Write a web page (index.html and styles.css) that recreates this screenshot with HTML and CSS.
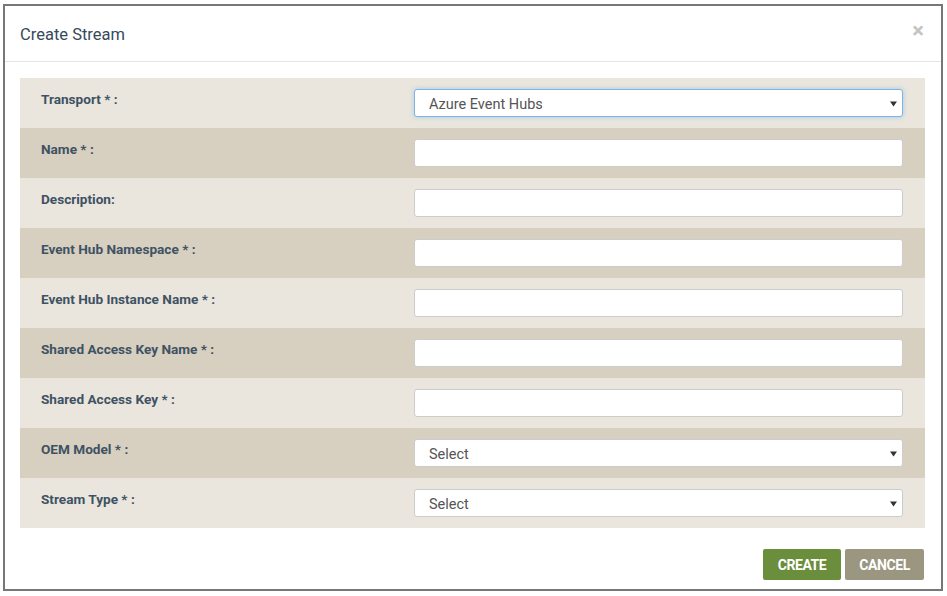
FILE: index.html
```html
<!DOCTYPE html>
<html>
<head>
<meta charset="utf-8">
<link rel="stylesheet" href="styles.css">
</head>
<body>
<div class="dialog">
  <div class="dialog-header">
    <h4 class="dialog-title">Create Stream</h4>
    <span class="close">&times;</span>
  </div>
  <div class="dialog-body">
    <div class="form">
      <div class="row light">
        <label class="lbl">Transport * :</label>
        <div class="field"><div class="select focus"><span>Azure Event Hubs</span><svg width="7" height="6" viewBox="0 0 7 6"><path d="M0 0.5h7L3.5 5.5z" fill="#333"/></svg></div></div>
      </div>
      <div class="row dark">
        <label class="lbl">Name * :</label>
        <div class="field"><input class="input" type="text"></div>
      </div>
      <div class="row light">
        <label class="lbl">Description:</label>
        <div class="field"><input class="input" type="text"></div>
      </div>
      <div class="row dark">
        <label class="lbl">Event Hub Namespace * :</label>
        <div class="field"><input class="input" type="text"></div>
      </div>
      <div class="row light">
        <label class="lbl">Event Hub Instance Name * :</label>
        <div class="field"><input class="input" type="text"></div>
      </div>
      <div class="row dark">
        <label class="lbl">Shared Access Key Name * :</label>
        <div class="field"><input class="input" type="text"></div>
      </div>
      <div class="row light">
        <label class="lbl">Shared Access Key * :</label>
        <div class="field"><input class="input" type="text"></div>
      </div>
      <div class="row dark">
        <label class="lbl">OEM Model * :</label>
        <div class="field"><div class="select"><span>Select</span><svg width="7" height="6" viewBox="0 0 7 6"><path d="M0 0.5h7L3.5 5.5z" fill="#333"/></svg></div></div>
      </div>
      <div class="row light">
        <label class="lbl">Stream Type * :</label>
        <div class="field"><div class="select"><span>Select</span><svg width="7" height="6" viewBox="0 0 7 6"><path d="M0 0.5h7L3.5 5.5z" fill="#333"/></svg></div></div>
      </div>
    </div>
  </div>
  <div class="dialog-footer">
    <button class="btn btn-create">CREATE</button>
    <button class="btn btn-cancel">CANCEL</button>
  </div>
</div>
</body>
</html>
```
FILE: styles.css
```css
* { box-sizing: border-box; }
html, body { margin: 0; padding: 0; background: #fff; }
body {
  font-family: Roboto, "Liberation Sans", sans-serif;
  padding: 4px 4px 5px 3px;
}
.dialog {
  width: 940px;
  height: 587px;
  border: 2px solid #777;
  background: #fff;
  display: flex;
  flex-direction: column;
}
.dialog-header {
  height: 56px;
  border-bottom: 1px solid #e5e5e5;
  display: flex;
  align-items: center;
  justify-content: space-between;
  padding: 2px 17px 0 15px;
}
.dialog-title {
  margin: 0;
  font-size: 16.5px;
  font-weight: 400;
  color: #37495a;
}
.close {
  font-size: 22px;
  font-weight: 700;
  color: #c4c4c4;
  line-height: 1;
  margin-top: -8px;
}
.dialog-body {
  padding: 16px 16px 0 15px;
}
.form {
  display: flex;
  flex-direction: column;
}
.row {
  height: 50px;
  display: flex;
  padding: 11px 22px 0 21px;
}
.row.light { background: #eae6dd; }
.row.dark { background: #d7cfbf; }
.lbl {
  width: 373px;
  font-size: 13.6px;
  font-weight: 700;
  color: #3e5264;
  line-height: 20px;
}
.field { flex: 1; }
.input, .select {
  display: flex;
  width: 100%;
  height: 28px;
  border: 1px solid #ccc;
  border-radius: 3px;
  background: #fff;
  margin: 0;
  outline: none;
}
.select {
  align-items: center;
  justify-content: space-between;
  padding: 2px 5px 0 14px;
  font-size: 14.5px;
  color: #555;
}
.select.focus {
  border-color: #7fb2e6;
  box-shadow: 0 0 5px rgba(102, 175, 233, 0.5);
}
.dialog-footer {
  display: flex;
  justify-content: flex-end;
  gap: 4px;
  padding: 21px 17px 0 0;
}
.btn {
  height: 31px;
  border: none;
  border-radius: 2px;
  color: #fff;
  font-family: Roboto, "Liberation Sans", sans-serif;
  font-weight: 700;
  font-size: 14px;
  letter-spacing: -0.4px;
  padding: 0;
  cursor: pointer;
}
.btn-create { width: 78px; background: #6a8e3b; }
.btn-cancel { width: 79px; background: #9a9680; }
```
